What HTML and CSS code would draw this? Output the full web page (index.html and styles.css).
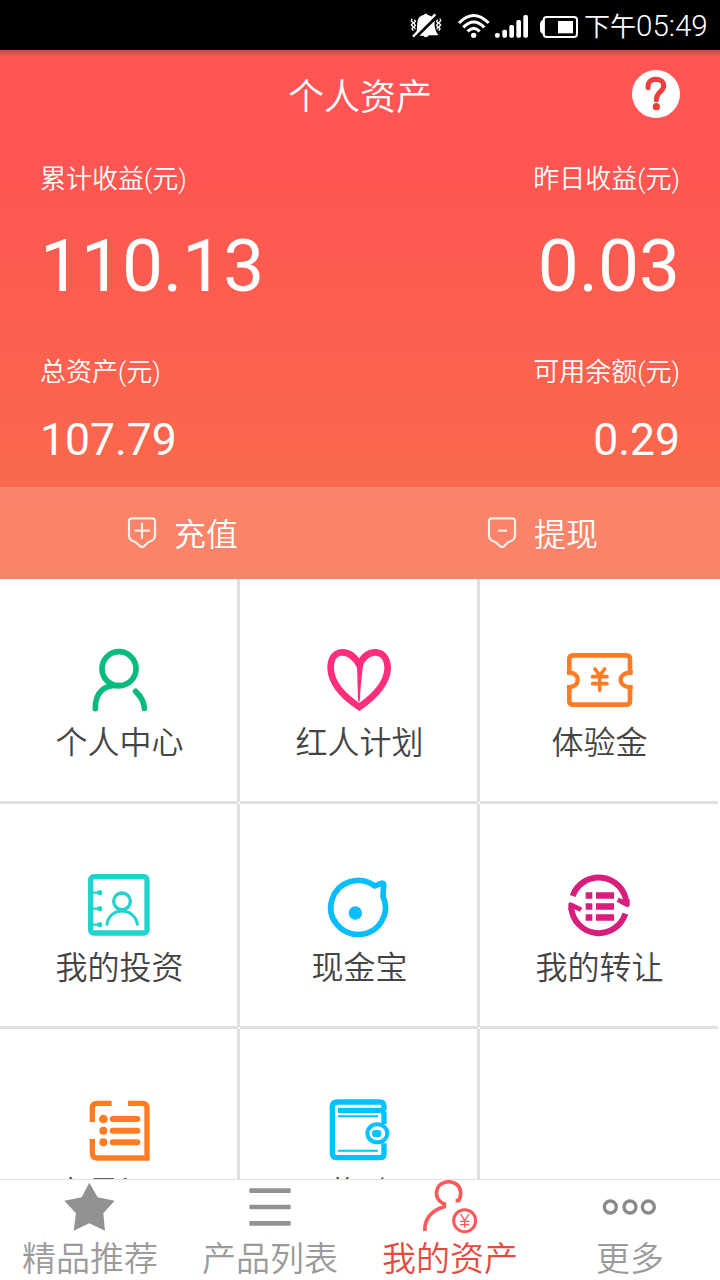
FILE: index.html
```html
<!DOCTYPE html>
<html lang="zh-CN">
<head>
<meta charset="utf-8">
<title>个人资产</title>
<link rel="stylesheet" href="styles.css">
</head>
<body>
<div class="screen">
  <div class="status">
    <svg class="status-icons" viewBox="18 30 525 90" fill="#fff">
      <path d="M48 100C53 88 50 78 52 68C54 52 62 47 71 45Q77 38 84 45Q93 47 98 53Z"/>
      <path d="M58 107L104 62C102 78 105 91 115 106H87Q78 117 70 107Z"/>
      <path d="M44 112L110 48" stroke="#000" stroke-width="9"/>
      <path d="M39 110L106 43" stroke="#fff" stroke-width="7"/>
      <path d="M36 56L34 63L40 68L34 75L40 81L36 86L40 92M43 59L46 64L42 70L46 76L42 82L46 87M120 56L122 63L116 68L122 75L116 81L120 86L116 92M113 59L110 64L114 70L110 76L114 82L110 87" fill="none" stroke="#fff" stroke-width="4"/>
      <g fill="none" stroke="#fff" stroke-width="9">
        <path d="M177 69Q221 24 266 69"/><path d="M190 82Q221 50 253 82"/><path d="M203 94Q221 76 239 94"/>
      </g>
      <circle cx="221" cy="106" r="8"/>
      <rect x="285" y="99" width="14" height="14" rx="5"/><rect x="307" y="89" width="14" height="24" rx="5"/><rect x="328" y="75" width="14" height="38" rx="5"/><rect x="349" y="60" width="14" height="53" rx="5"/><rect x="370" y="45" width="14" height="68" rx="5"/>
      <rect x="431" y="51" width="100" height="60" rx="9" fill="none" stroke="#fff" stroke-width="6"/>
      <path d="M434 60H427Q420 64 420 72V90Q420 98 427 102H434Z"/>
      <rect x="474" y="63" width="45" height="37"/>
    </svg>
    <div class="clock">下午<span class="clock-digits">05:49</span></div>
  </div>

  <div class="hero">
    <div class="header">
      <h1 class="title">个人资产</h1>
      <svg class="help" viewBox="696 210 144 144">
        <circle cx="768" cy="282" r="72" fill="#fff"/>
        <path d="M744 263Q743 239 768 238Q792 239 791 259Q790 268 780 276Q769 286 769 299" fill="none" stroke="#ee3e3e" stroke-width="15" stroke-linecap="round"/>
        <circle cx="769" cy="320" r="11" fill="#ee3e3e"/>
      </svg>
    </div>
    <div class="labels"><span>累计收益(元)</span><span>昨日收益(元)</span></div>
    <div class="values big"><span>110.13</span><span>0.03</span></div>
    <div class="labels second"><span>总资产(元)</span><span>可用余额(元)</span></div>
    <div class="values small"><span>107.79</span><span>0.29</span></div>
    <div class="actions">
      <div class="action">
        <svg class="shield" viewBox="78 105 96 105"><path d="M96 115H156Q165 115 165 124V166Q165 178 155 182Q145 185 139 192L130 200Q126 203 122 200L113 192Q107 185 97 182Q87 178 87 166V124Q87 115 96 115Z"/><path d="M104 152H150M126 128V176"/></svg>
        <span>充值</span>
      </div>
      <div class="action">
        <svg class="shield" viewBox="78 105 96 105"><path d="M96 115H156Q165 115 165 124V166Q165 178 155 182Q145 185 139 192L130 200Q126 203 122 200L113 192Q107 185 97 182Q87 178 87 166V124Q87 115 96 115Z"/><path d="M114 152H141"/></svg>
        <span>提现</span>
      </div>
    </div>
  </div>

  <div class="grid">
    <div class="cell">
      <svg class="icon" viewBox="129 45 213 213" fill="none" stroke="#08ba7b" stroke-width="17" stroke-linecap="round"><ellipse cx="237" cy="116" rx="51" ry="51"/><path d="M237 167C190 163 165 190 166 236M287 184Q312 208 313 235"/></svg>
      <span class="name">个人中心</span>
    </div>
    <div class="cell">
      <svg class="icon" viewBox="129 45 213 213"><path d="M238 105C222 75 204 66 185 67C162 69 151 89 152 116C154 159 191 200 238 231C284 199 321 159 323 116C323 87 310 69 288 67C267 66 249 80 238 105Z" fill="none" stroke="#ff2e7d" stroke-width="20"/><path d="M231 100L250 101Q243 150 239 215L234 213Z" fill="#ff2e7d"/></svg>
      <span class="name">红人计划</span>
    </div>
    <div class="cell">
      <svg class="icon" viewBox="129 45 213 213" fill="none" stroke="#ff7c24" stroke-width="14"><path d="M148 132V88Q148 76 160 76H318Q330 76 330 88V132M330 168V212Q330 224 318 224H160Q148 224 148 212V168"/><path d="M141 129C184 122 184 176 141 171M338 129C290 122 290 176 338 171" stroke-width="13"/><path d="M225 117L239 137L254 117M218 140H261M218 161H261M239 138V181" stroke-width="11" stroke-linecap="round"/></svg>
      <span class="name">体验金</span>
    </div>
    <div class="cell">
      <svg class="icon" viewBox="129 30 213 213" fill="none" stroke="#20d3cd" stroke-width="16"><rect x="152" y="50" width="169" height="169" rx="9"/><circle cx="246" cy="124" r="25" stroke-width="10"/><path d="M201 193C207 140 284 140 292 193" stroke-width="9" stroke-linecap="round"/><path d="M158 98H178M158 146H178M158 194H178" stroke-width="7"/><g fill="#20d3cd" stroke="none"><circle cx="179" cy="98" r="8"/><circle cx="179" cy="146" r="8"/><circle cx="179" cy="194" r="8"/></g></svg>
      <span class="name">我的投资</span>
    </div>
    <div class="cell">
      <svg class="icon" viewBox="129 30 213 213"><path d="M284 78A82 81 0 1 0 309 109L311 72Q309 68 303 70Z" fill="none" stroke="#08bdfb" stroke-width="17" stroke-linejoin="round"/><circle cx="226" cy="159" r="20" fill="#08bdfb"/></svg>
      <span class="name">现金宝</span>
    </div>
    <div class="cell">
      <svg class="icon" viewBox="129 30 213 213" fill="#d71e7d"><path d="M158 108A83 83 0 0 1 319 128M316 161A83 83 0 0 1 154 143" fill="none" stroke="#d71e7d" stroke-width="18"/><path d="M329 117V137Q325 143 318 140L290 125L296 113L313 120ZM145 151V132Q147 124 156 128L187 143L180 155L161 146Z"/><path d="M197 97H217V116H197ZM228 97H282V116H228ZM197 130H217V149H197ZM228 130H282V149H228ZM197 163H217V182H197ZM228 163H282V182H228Z"/></svg>
      <span class="name">我的转让</span>
    </div>
    <div class="cell">
      <svg class="icon" viewBox="129 45 213 213" fill="none" stroke="#ff7c24" stroke-width="16"><path d="M157 126V84Q157 70 171 70H215M264 70H307Q321 70 321 84V234H171Q157 234 157 220V177"/><path d="M218 117H292M218 152H292M218 187H292" stroke-width="18" stroke-linecap="round"/><g fill="#ff7c24" stroke="none"><circle cx="190" cy="117" r="13"/><circle cx="190" cy="152" r="12"/><circle cx="190" cy="187" r="12"/></g></svg>
      <span class="name">交易记录</span>
    </div>
    <div class="cell">
      <svg class="icon" viewBox="849 45 213 213" fill="none" stroke="#00c2ff"><path d="M1032 90V79Q1032 66 1020 66H892Q877 66 877 81V218Q877 233 892 233H1020Q1032 233 1032 221V190M1032 132V104Q1032 91 1020 91H894" stroke-width="16"/><path d="M894 109H1014M894 212H1014" stroke-width="6"/><ellipse cx="1012" cy="160" rx="30" ry="27" stroke-width="12" fill="#fff"/><rect x="996" y="150" width="28" height="21" rx="10" fill="#00c2ff" stroke="none"/></svg>
      <span class="name">奖励</span>
    </div>
    <div class="cell"></div>
  </div>

  <div class="tabs">
    <div class="tab">
      <svg class="tab-icon" viewBox="42 300 216 159"><path d="M148 308L173 352L224 362L190 400L195 452L148 430L101 452L108 400L73 362L125 352Z" fill="#929292"/></svg>
      <span>精品推荐</span>
    </div>
    <div class="tab">
      <svg class="tab-icon" viewBox="582 300 216 159" fill="#929292"><rect x="628" y="325" width="124" height="14" rx="3"/><rect x="628" y="374" width="124" height="14" rx="3"/><rect x="628" y="423" width="124" height="14" rx="3"/></svg>
      <span>产品列表</span>
    </div>
    <div class="tab active">
      <svg class="tab-icon" viewBox="162 60 216 159" fill="none" stroke="#ff5858" stroke-width="11"><path d="M287 122H296C307 103 302 80 287 71C268 60 241 66 233 84C225 102 231 123 253 132V140C215 150 192 178 195 213"/><circle cx="314" cy="182" r="33" stroke-width="9"/><path d="M302 162L314 182L327 162M300 184H328M300 194H328M314 182V203" stroke-width="4"/></svg>
      <span>我的资产</span>
    </div>
    <div class="tab">
      <svg class="tab-icon" viewBox="702 60 216 159" fill="none" stroke="#8a8a8a" stroke-width="10"><circle cx="751" cy="141" r="18"/><circle cx="810" cy="141" r="18"/><circle cx="865" cy="141" r="18"/></svg>
      <span>更多</span>
    </div>
  </div>
</div>
</body>
</html>
```
FILE: styles.css
```css
* { box-sizing: border-box; }
body { margin: 0; }
svg { display: block; flex: none; }

.screen {
  width: 720px;
  height: 1280px;
  display: flex;
  flex-direction: column;
  overflow: hidden;
  background: #fff;
  font-family: Roboto, "Noto Sans CJK SC DemiLight", "Noto Sans CJK SC", sans-serif;
  font-weight: 350;
}

.status {
  height: 50px;
  flex: none;
  display: flex;
  align-items: center;
  padding-left: 406px;
  background: #000;
  color: #fff;
}
.status-icons { width: 175px; height: 30px; }
.clock {
  margin-left: 3px;
  padding-top: 3px;
  font-size: 26px;
  line-height: 47px;
  font-weight: 300;
  white-space: nowrap;
}
.clock-digits { font-size: 29.5px; }

.hero {
  height: 529px;
  flex: none;
  background:
    linear-gradient(rgba(120, 50, 50, .4), rgba(120, 50, 50, 0)) 0 0 / 100% 6px no-repeat,
    linear-gradient(#ff5555 0, #ff5453 90px, #f9694c 437px, #f86d4b 100%);
  color: #fff;
}
.header {
  height: 90px;
  display: grid;
  grid-template-columns: 1fr 144px 1fr;
  align-items: center;
}
.title {
  grid-column: 2;
  margin: 0;
  padding-top: 6px;
  font-size: 36px;
  font-weight: 350;
  line-height: 84px;
  white-space: nowrap;
}
.help {
  width: 48px;
  height: 48px;
  justify-self: end;
  margin: 0 40px 2px 0;
}
.labels, .values {
  display: flex;
  justify-content: space-between;
  padding: 0 40px;
  white-space: nowrap;
}
.labels { height: 76px; font-size: 26px; line-height: 79px; }
.values { font-weight: 400; }
.big { height: 100px; font-size: 73px; line-height: 101px; }
.second { height: 108px; line-height: 113px; }
.small { height: 63px; font-size: 44.5px; line-height: 32px; }

.actions {
  height: 92px;
  display: grid;
  grid-template-columns: 1fr 1fr;
  background: rgba(255, 255, 255, .17);
}
.action {
  display: flex;
  align-items: center;
  gap: 16px;
  padding-left: 126px;
  font-size: 32px;
}
.action span { padding-top: 4px; line-height: 88px; }
.shield {
  width: 32px;
  height: 35px;
  margin-bottom: 2px;
  fill: none;
  stroke: rgba(255, 255, 255, .85);
  stroke-width: 6.5;
}

.grid {
  height: 600px;
  flex: none;
  display: grid;
  grid-template-columns: repeat(3, 240px);
  grid-auto-rows: 225px;
  overflow: hidden;
}
.cell {
  display: flex;
  flex-direction: column;
  align-items: center;
  padding: 66px 3px 0 0;
  background:
    linear-gradient(#fff, #fff) 100% 100% / 2px 2px no-repeat,
    linear-gradient(#dfdfdf, #dfdfdf) 100% 0 / 3px 100% no-repeat,
    linear-gradient(#dfdfdf, #dfdfdf) 0 100% / 100% 3px no-repeat;
}
.cell:nth-child(3n) {
  background: linear-gradient(#dfdfdf, #dfdfdf) 0 100% / 238px 3px no-repeat;
}
.icon { width: 71px; height: 71px; }
.name {
  margin-top: 11px;
  padding-left: 2px;
  font-size: 32px;
  line-height: 32px;
  color: #444;
}

.tabs {
  height: 101px;
  flex: none;
  display: grid;
  grid-template-columns: repeat(4, 1fr);
  border-top: 1px solid #e2e2e2;
  background: #fff;
  color: #9b9b9b;
}
.tab {
  display: flex;
  flex-direction: column;
  align-items: center;
  font-size: 34px;
  line-height: 41px;
}
.tab span { padding-top: 6px; }
.tab-icon { width: 72px; height: 53px; }
.active { color: #e54b3d; }
```
